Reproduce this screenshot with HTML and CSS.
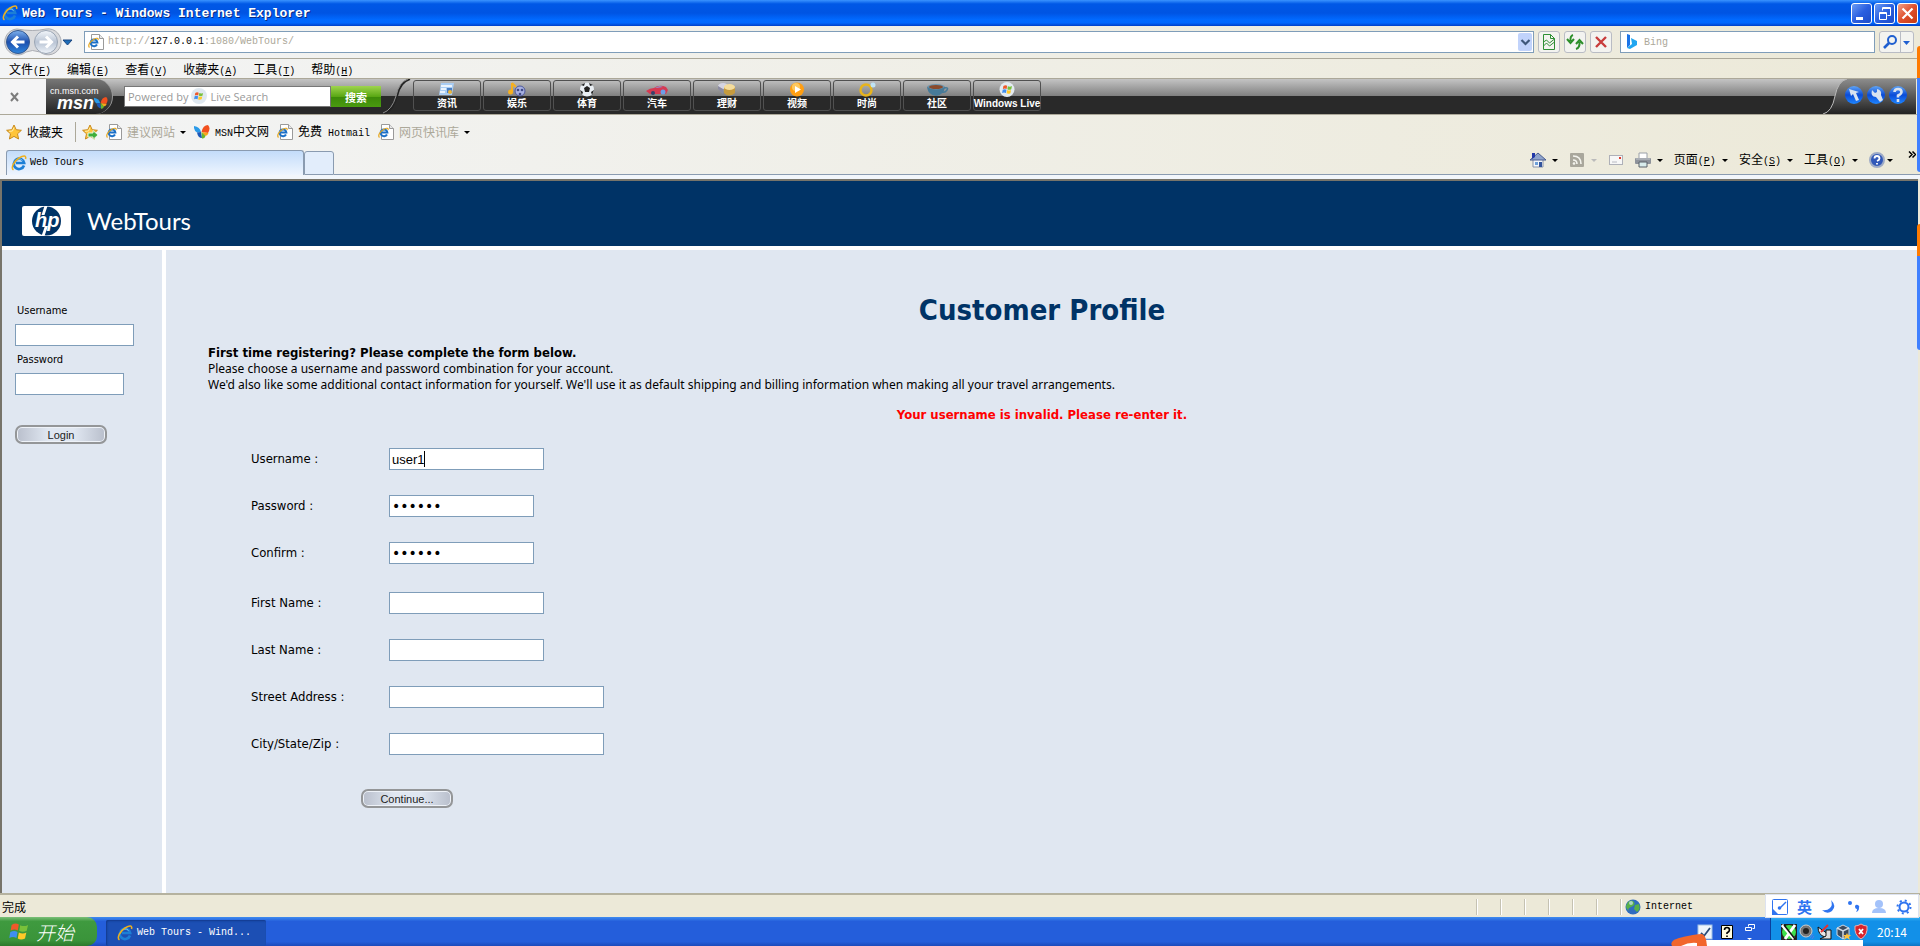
FILE: index.html
```
<!DOCTYPE html>
<html lang="zh-CN">
<head>
    <meta charset="UTF-8">
    <meta name="viewport" content="width=device-width, initial-scale=1.0">
    <title>Web Tours</title>
    <link rel="stylesheet" href="styles.css">
</head>
<body>
    <!-- shared icons -->
    <svg class="defs" width="0" height="0">
        <defs>
            <linearGradient id="gBlue" x1="0" y1="0" x2="0" y2="1">
                <stop offset="0" stop-color="#7fb2ee"/><stop offset=".5" stop-color="#1c4fae"/><stop offset="1" stop-color="#2f86dd"/>
            </linearGradient>
            <linearGradient id="gGray" x1="0" y1="0" x2="0" y2="1">
                <stop offset="0" stop-color="#f4f7fb"/><stop offset=".5" stop-color="#b9c4d4"/><stop offset="1" stop-color="#eef3f9"/>
            </linearGradient>
            <linearGradient id="gOrb" x1="0" y1="0" x2="0" y2="1">
                <stop offset="0" stop-color="#5fa4f5"/><stop offset=".5" stop-color="#0a4bd8"/><stop offset="1" stop-color="#1f86ff"/>
            </linearGradient>
            <linearGradient id="gPanel" x1="0" y1="0" x2="0" y2="1">
                <stop offset="0" stop-color="#8c8c8c"/><stop offset="1" stop-color="#222"/>
            </linearGradient>
        </defs>
        <symbol id="ie" viewBox="0 0 16 16">
            <path d="M13 10.5A5.2 5.2 0 1 1 13.2 8H5" fill="none" stroke="#1c7fd6" stroke-width="2.6"/>
            <path d="M4.600 6.500A4 4 0 0 1 11.500 5.500" fill="none" stroke="#7cc4f7" stroke-width="1"/>
            <path d="M2.500 14.800C-.5 13 3 6 8 3S15.500 .5 14.500 4" fill="none" stroke="#eeb01e" stroke-width="1.500"/>
        </symbol>
        <symbol id="page" viewBox="0 0 16 16">
            <path d="M3.500 .5h8l4 4v11h-12z" fill="#fff" stroke="#9a9a9a"/>
            <path d="M11.500 .5v4h4" fill="#e8e8e8" stroke="#9a9a9a"/>
            <path d="M9 10.500A3.400 3.400 0 1 1 9.400 8.500H3" fill="none" stroke="#1c70c8" stroke-width="2"/>
            <path d="M1.500 13.500C-.5 11.500 2 7.500 5.500 5.500S10.500 4 10 6" fill="none" stroke="#e8a81e" stroke-width="1.200"/>
        </symbol>
        <symbol id="star" viewBox="0 0 16 16">
            <path d="M8 1l2.200 4.700 5.200.6-3.900 3.500 1.100 5.200L8 12.400 3.400 15l1.100-5.200L.6 6.300l5.200-.6z" fill="#ffc53a" stroke="#c98a1c"/>
            <path d="M8 3.500L6.500 7l-3.500.3" fill="none" stroke="#fff0b0"/>
        </symbol>
        <symbol id="flag" viewBox="0 0 16 16">
            <path d="M2 3q3-2 5.500-.3L6.700 7.200Q4 5.700 1.300 7.300z" fill="#f0592a"/>
            <path d="M8.500 3.200q3 1.500 6-.2l-1 4.500q-3 1.500-5.700 0z" fill="#79c13a"/>
            <path d="M1 8.400q3-1.500 5.500 0L5.700 13Q3 11.500 .2 13z" fill="#3f8ef0"/>
            <path d="M7.500 8.800q3 1.500 5.700 0l-1 4.500q-3 1.500-5.500.1z" fill="#ffc928"/>
        </symbol>
        <symbol id="butterfly" viewBox="0 0 16 16">
            <path d="M7 8Q6 3 0 2q-.5 4 3 6.500z" fill="#2a9ae8"/>
            <path d="M3 8.500L7 8l1 6q-4 0-5-5.500z" fill="#1b58b8"/>
            <path d="M7.500 8Q9 1 14 1q3 3 0 8z" fill="#f2501e"/>
            <path d="M8 8l6.500 1q-1 3-4 3z" fill="#f8a51a"/>
            <path d="M7.500 8l4 4q-1 3-3.500 2.500z" fill="#6cb52d"/>
        </symbol>
    </svg>

    <header class="titlebar">
        <svg class="i16"><use href="#ie"/></svg>
        <span class="title">Web Tours - Windows Internet Explorer</span>
        <button class="win" aria-label="Minimize"><svg width="19" height="19"><rect x="4" y="13" width="7" height="3" fill="#fff"/></svg></button>
        <button class="win" aria-label="Restore"><svg width="19" height="19" fill="none" stroke="#fff"><path d="M7.500 6.500v-3h8v8h-3M7 4.500h9M4.500 8.500h7v7h-7zM4 9.500h8"/></svg></button>
        <button class="win close" aria-label="Close"><svg width="19" height="19" stroke="#fff" stroke-width="2.200"><path d="M4.500 4.500l10 10M14.500 4.500l-10 10"/></svg></button>
    </header>

    <div class="addressbar">
        <svg class="navbtns" width="70" height="28" viewBox="0 0 70 28">
            <path d="M13 1Q29 4 42 1a13 13 0 1 1-6 23q-8-3-14 0A13 13 0 1 1 13 1z" fill="#d9dadd" stroke="#aaacb2"/>
            <circle cx="14" cy="14" r="11.500" fill="url(#gBlue)" stroke="#33578f"/>
            <path d="M20.500 14H9M14 8.500L8.500 14l5.500 5.500" fill="none" stroke="#fff" stroke-width="3"/>
            <circle cx="42" cy="14" r="11.500" fill="url(#gGray)" stroke="#9aa5b4"/>
            <path d="M35.500 14H47M42 8.500l5.500 5.500-5.500 5.500" fill="none" stroke="#fff" stroke-width="3"/>
            <path d="M59 12h9l-4.500 5z" fill="#1e6db8" stroke="#1a4680"/>
        </svg>
        <div class="field url">
            <svg class="i16"><use href="#page"/></svg>
            <span class="mono">http://<b>127.0.0.1</b>:1080/WebTours/</span>
            <button class="drop" aria-label="History"><svg width="13" height="18"><path d="M2.500 7l4 4 4-4" fill="none" stroke="#3f587a" stroke-width="2.200"/></svg></button>
        </div>
        <button class="tool" aria-label="Compatibility view"><svg width="20" height="20" fill="none" stroke="#2e8f35"><path d="M4.500 2.500h7l4 4v11h-11zM11.500 2.500v4h4M4.500 10l3-2 3 3 5-4M4.500 14l3-3 3 3 5-4"/></svg></button>
        <button class="tool" aria-label="Refresh"><svg width="20" height="20" fill="none" stroke="#2d8f2a" stroke-width="2"><path d="M8 3Q5 4 5.500 9M2 7l3.500 4L9 7M11 17q4-1 3.500-7M11 12l3.500-4 3.500 4"/></svg></button>
        <button class="tool" aria-label="Stop"><svg width="20" height="20" stroke="#c83c3c" stroke-width="2.400"><path d="M5 5l10 10M15 5L5 15"/></svg></button>
        <div class="field search">
            <svg width="12" height="16" viewBox="0 0 12 16"><path d="M1 0l3 1v10l-3 3z" fill="#1c74e8"/><path d="M5 4l6 3v4l-7 4-3-1 5-4z" fill="#21a6f0"/></svg>
            <input class="mono" type="text" placeholder="Bing" aria-label="Bing">
        </div>
        <div class="go">
            <button aria-label="Search"><svg width="18" height="18" fill="none" stroke="#1f5fd0" stroke-width="2"><circle cx="11" cy="7" r="4"/><path d="M8 10l-5 5" stroke-width="2.600"/></svg></button>
            <button aria-label="Providers"><svg width="9" height="18"><path d="M1 8h7L4.500 12z" fill="#1f5fd0"/></svg></button>
        </div>
    </div>

    <nav class="menubar">
        <a href="#">文件<span class="mono">(<u>F</u>)</span></a>
        <a href="#">编辑<span class="mono">(<u>E</u>)</span></a>
        <a href="#">查看<span class="mono">(<u>V</u>)</span></a>
        <a href="#">收藏夹<span class="mono">(<u>A</u>)</span></a>
        <a href="#">工具<span class="mono">(<u>T</u>)</span></a>
        <a href="#">帮助<span class="mono">(<u>H</u>)</span></a>
    </nav>

    <div class="msnbar">
        <button class="x" aria-label="Close toolbar"><svg width="10" height="10" stroke="#7c7c7c" stroke-width="2"><path d="M1 1l7 8M8 1L1 9"/></svg></button>
        <div class="msnlogo">
            <small>cn.msn.com</small>
            <span><strong>msn</strong><svg width="15" height="16"><use href="#butterfly"/></svg></span>
        </div>
        <form class="livesearch">
            <label for="live">Powered by <svg class="i16"><circle cx="8" cy="8" r="8" fill="#dfe8f0"/><use href="#flag" x="3" y="3" width="10" height="10"/></svg> Live Search</label>
            <input id="live" type="text">
            <button type="button">搜索</button>
        </form>
        <svg class="arc" width="28" height="35"><path d="M0 35Q10 32 14 17 17 3 27 0" fill="none" stroke="#222" stroke-width="2"/><path d="M0 34Q9 31 13 17 16 3 25 0" fill="none" stroke="#8d8d8d"/></svg>
        <nav class="channels">
            <a href="#"><svg width="20" height="15"><path d="M4 1h13l-2 12H2z" fill="#a9cdf4"/><path d="M4 4h11M4 7h5M3 10h5" stroke="#fff" stroke-width="1.500"/><path d="M10 6h5v5h-5z" fill="#4a7fc4"/><circle cx="13" cy="10" r="2" fill="#efb73c"/></svg>资讯</a>
            <a href="#"><svg width="20" height="15"><path d="M5 1v9M5 1l4 4" stroke="#f6b01e" stroke-width="2"/><circle cx="3.500" cy="10" r="2.500" fill="#f6b01e"/><circle cx="13" cy="9" r="5" fill="#a7b0e0" stroke="#4d589c"/><circle cx="11" cy="8" r="1.300" fill="#3f4a88"/><circle cx="15" cy="8" r="1.300" fill="#3f4a88"/><circle cx="13" cy="12" r="1.300" fill="#3f4a88"/></svg>娱乐</a>
            <a href="#"><svg width="20" height="15"><circle cx="10" cy="7.500" r="7" fill="#e9eef3"/><path d="M10 4l3 2-1 4H8L7 6zM4 3l4-2-1 3zM16 3l-4-2 1 3zM3 8l3 2-1 3zM17 8l-3 2 1 3z" fill="#222"/></svg>体育</a>
            <a href="#"><svg width="22" height="15"><path d="M0 9q4-3 8-3 5-4 12-1l2 3-2 4H4z" fill="#d63a52"/><path d="M9 6q4-3 8-1z" fill="#86a6e8"/><circle cx="7" cy="11" r="2" fill="#37406c"/><circle cx="17" cy="10" r="2.500" fill="#6b9fe8"/></svg>汽车</a>
            <a href="#"><svg width="20" height="15"><ellipse cx="6" cy="4" rx="5" ry="3" fill="#d4d4e2"/><path d="M1 4v3l5 5V7z" fill="#8b8ba2"/><path d="M7 5v6q5 5 11 0V5z" fill="#c59a3e"/><ellipse cx="12.500" cy="5" rx="5.500" ry="3" fill="#f4dc9c"/></svg>理财</a>
            <a href="#"><svg width="20" height="15"><circle cx="10" cy="7.500" r="7" fill="#ff9e12"/><circle cx="9" cy="5" r="4" fill="#ffc95e"/><path d="M8 4l6 3.500L8 11z" fill="#fff"/></svg>视频</a>
            <a href="#"><svg width="20" height="15"><circle cx="9" cy="8" r="5.500" fill="none" stroke="#e8b41c" stroke-width="2.400"/><circle cx="16" cy="3" r="2.500" fill="#bfe3f4"/></svg>时尚</a>
            <a href="#"><svg width="24" height="15"><ellipse cx="11" cy="5" rx="9" ry="3" fill="#6d94ac"/><ellipse cx="11" cy="5" rx="7" ry="2" fill="#8a4a2c"/><path d="M2 5q1 8 9 9 8-1 9-9-9 5-18 0z" fill="#477a98"/><path d="M19 6q5-1 3 2t-5 2" fill="none" stroke="#477a98" stroke-width="1.500"/></svg>社区</a>
            <a href="#"><svg width="20" height="15"><circle cx="10" cy="7.500" r="7.500" fill="#e3ebf1"/><use href="#flag" x="5" y="2" width="11" height="11"/></svg>Windows Live</a>
        </nav>
        <svg class="orbs" width="94" height="35">
            <path d="M1 35Q10 33 13 17 16 2 25 0H94v35z" fill="url(#gPanel)"/>
            <path d="M1 35Q10 33 13 17 16 2 25 0" fill="none" stroke="#bbb"/>
            <g fill="url(#gOrb)"><circle cx="32" cy="16" r="9"/><circle cx="54" cy="16" r="9"/><circle cx="76" cy="16" r="9"/></g>
            <path d="M27 10l10 3-3 1 3 7-3 1-3-7-2 2z" fill="#d8e2f0"/>
            <path d="M50 11l3 3 2-1 0-3q5 1 4 6l2 5-3 2-4-5q-6 0-4-7z" fill="#d8e2f0"/>
            <path d="M72.500 13q0-3 3.500-3t3.500 3q0 2-3.500 3.500v2M76 20v3" fill="none" stroke="#d8e2f0" stroke-width="2.600"/>
        </svg>
    </div>

    <nav class="favbar">
        <a href="#"><svg class="i16"><use href="#star"/></svg>收藏夹</a>
        <i class="sep"></i>
        <a href="#" aria-label="Add to favorites"><svg class="i16"><use href="#star"/><path d="M6 9h5V6.500l5 4.500-5 4.500V13H6z" fill="#3fae3a" stroke="#e6f5e0"/></svg></a>
        <a href="#" class="dim"><svg class="i16"><use href="#page"/></svg>建议网站<i class="tri"></i></a>
        <a href="#"><svg class="i16"><use href="#butterfly"/></svg><span><span class="mono">MSN</span>中文网</span></a>
        <a href="#"><svg class="i16"><use href="#page"/></svg><span>免费<span class="mono"> Hotmail</span></span></a>
        <a href="#" class="dim"><svg class="i16"><use href="#page"/></svg>网页快讯库<i class="tri"></i></a>
    </nav>

    <div class="tabrow">
        <a href="#" class="tab mono"><svg class="i16"><use href="#ie"/></svg>Web Tours</a>
        <button class="newtab" aria-label="New tab"></button>
        <nav class="commands">
            <a href="#" aria-label="Home"><svg class="i16"><path d="M3 7h10v8H3z" fill="#f4f6fa" stroke="#8a93a8"/><path d="M0 8l8-7 8 7z" fill="#8fa4cc" stroke="#4a5d90"/><path d="M2 1h3v4L2 7z" fill="#2238a8"/><path d="M9 10h3v5H9z" fill="#33549c"/><path d="M5 10h3v3H5z" fill="#6ea0d8"/></svg><i class="tri"></i></a>
            <a href="#" aria-label="Feeds"><svg class="i16"><rect x="1" y="1" width="14" height="14" rx="1" fill="#a9a79c"/><path d="M4 4q8 0 8 8M4 8q4 0 4 4" fill="none" stroke="#f4f4ee" stroke-width="1.600"/><circle cx="5" cy="11.500" r="1.300" fill="#f4f4ee"/></svg><i class="tri off"></i></a>
            <a href="#" aria-label="Mail"><svg class="i16"><rect x="1.500" y="3.500" width="13" height="9" fill="#f7f7f7" stroke="#aeb0b8"/><path d="M4 10h5" stroke="#b8bac2"/><path d="M11 5h2v2h-2z" fill="#e03a2c"/></svg></a>
            <a href="#" aria-label="Print"><svg class="i16"><path d="M4 1h8v6H4z" fill="#fff" stroke="#9aa0a8"/><rect y="6" width="16" height="6" rx="1" fill="#8d929a"/><path d="M1 7h14" stroke="#c4c8ce"/><path d="M4 10h8v5H4z" fill="#d8ecec" stroke="#5a6068"/></svg><i class="tri"></i></a>
            <a href="#"><span>页面<span class="mono">(<u>P</u>)</span></span><i class="tri"></i></a>
            <a href="#"><span>安全<span class="mono">(<u>S</u>)</span></span><i class="tri"></i></a>
            <a href="#"><span>工具<span class="mono">(<u>O</u>)</span></span><i class="tri"></i></a>
            <a href="#" class="help" aria-label="Help"><svg class="i16"><circle cx="8" cy="8" r="7" fill="#3158b8" stroke="#9eabc6" stroke-width="2"/><path d="M5.500 6.500q0-2.500 2.500-2.500t2.500 2.500Q10.500 8 8 9M8 11v1.500" fill="none" stroke="#fff" stroke-width="1.800"/></svg><i class="tri"></i></a>
            <a href="#" class="more" aria-label="More"><svg width="8" height="7" fill="none" stroke="#000" stroke-width="1.500"><path d="M1 .5l3 3-3 3M4.500 .5l3 3-3 3"/></svg></a>
        </nav>
    </div>

    <div class="viewport">
        <div class="banner">
            <svg width="49" height="30" viewBox="0 0 49 30">
                <rect width="49" height="30" rx="2" fill="#fff"/>
                <circle cx="24.500" cy="15" r="14.500" fill="#036"/>
                <path d="M22.500 0h3l-3 9h-3zM23 20h3l-3.500 10h-3z" fill="#fff"/>
                <text x="13" y="21" font-family="Liberation Sans" font-size="20" font-style="italic" font-weight="bold" fill="#fff">hp</text>
            </svg>
            <span class="brand">WebTours</span>
        </div>
        <aside class="login">
            <form>
                <label for="loginUser">Username</label>
                <input id="loginUser" class="box w119" type="text">
                <label for="loginPass">Password</label>
                <input id="loginPass" class="box w109" type="password">
                <button class="pill" type="button">Login</button>
            </form>
        </aside>
        <main class="profile">
            <h1>Customer Profile</h1>
            <p class="intro"><b>First time registering? Please complete the form below.</b><br>
                Please choose a username and password combination for your account.<br>
                We'd also like some additional contact information for yourself. We'll use it as default shipping and billing information when making all your travel arrangements.</p>
            <p class="error">Your username is invalid. Please re-enter it.</p>
            <form class="register">
                <div class="group">
                    <label for="user">Username :</label>
                    <div class="typing"><input id="user" class="box w155" type="text" value="user1"><i class="caret"></i></div>
                    <label for="pass">Password :</label>
                    <input id="pass" class="box w145" type="password" value="secret">
                    <label for="confirm">Confirm :</label>
                    <input id="confirm" class="box w145" type="password" value="secret">
                </div>
                <div class="group">
                    <label for="first">First Name :</label>
                    <input id="first" class="box w155" type="text">
                    <label for="last">Last Name :</label>
                    <input id="last" class="box w155" type="text">
                    <label for="street">Street Address :</label>
                    <input id="street" class="box w215" type="text">
                    <label for="city">City/State/Zip :</label>
                    <input id="city" class="box w215" type="text">
                </div>
                <button class="pill" type="button">Continue...</button>
            </form>
        </main>
    </div>

    <footer class="statusbar">
        <span class="done">完成</span>
        <i></i><i></i><i></i><i></i><i></i><i></i><i></i>
        <span class="zone mono"><svg class="i16"><circle cx="8" cy="8" r="7.500" fill="#2f6cc0"/><path d="M3 3q4-3 6 0T6 8t-1 5Q1 10 1 7zM10 6l4-1q2 5-2 8l-3-3z" fill="#58b04a"/><circle cx="6" cy="4" r="2" fill="#cfe6f4" opacity=".7"/></svg>Internet</span>
    </footer>

    <div class="taskbar">
        <button class="start"><svg width="21" height="21"><use href="#flag"/></svg>开始</button>
        <button class="task mono"><svg class="i16"><use href="#ie"/></svg>Web Tours - Wind...</button>
        <div class="langbar">
            <svg class="i16"><rect x="1" y="1" width="14" height="14" fill="#eef5fc" stroke="#9fc0e4"/><path d="M4 9l3 3 6-8" fill="none" stroke="#2c4c78" stroke-width="1.800"/></svg>
            <svg class="i16"><path d="M2.500 1.500h11v13h-11z" fill="#fffde0" stroke="#000"/><path d="M5.500 6q0-2.500 2.500-2.500t2.500 2.500q0 1.500-2.500 3v1M8 11.500V13" fill="none" stroke="#000" stroke-width="1.600"/></svg>
            <svg class="i16" stroke="#fff" fill="none"><path d="M7.500 2.500v-2h6v4h-2M4.500 3.500h6v3h-6z"/><path d="M6 14h5l-2.500 2z" fill="#fff" stroke="none"/></svg>
        </div>
        <div class="tray">
            <svg class="i16"><rect width="16" height="16" fill="#222"/><circle cx="8" cy="8" r="7" fill="#3fe04a"/><path d="M1 1l12 14M14 1L4 15" stroke="#fff" stroke-width="3"/><path d="M3 1l11 14" stroke="#111" stroke-width="1.500"/></svg>
            <svg class="i16"><circle cx="7" cy="7" r="6" fill="#777" stroke="#ccc"/><circle cx="7" cy="7" r="3" fill="#222"/><path d="M11 14l3-4M13 15l2-3" stroke="#5a78e8"/></svg>
            <svg class="i16"><path d="M1 3l10 7-3 3q-7-2-7-10z" fill="#e8e8e8" stroke="#111"/><path d="M4 8l7-7" stroke="#e83030" stroke-width="2"/><path d="M9 6h5v9H3l6-3z" fill="#ddd" stroke="#111"/></svg>
            <svg class="i16"><path d="M8 1l6 3v7l-6 4-6-4V4z" fill="#3c4a5c" stroke="#cfd9e4"/><path d="M2 4l6 3 6-3M8 7v8" fill="none" stroke="#cfd9e4" stroke-width="1.500"/><path d="M12 9l1 2h3l-2 2 1 3-3-2-3 2 1-3-2-2h3z" fill="#ffc23c"/></svg>
            <svg class="i16"><path d="M8 0q3 2 6 2 1 9-6 13Q1 11 2 2q3 0 6-2z" fill="#d8232c" stroke="#e8b0b0"/><path d="M6 5l4 5M10 5l-4 5" stroke="#fff" stroke-width="1.800"/></svg>
            <span>20:14</span>
        </div>
    </div>

    <!-- floating windows over the desktop -->
    <div class="ime">
        <svg class="i16"><rect x=".5" y=".5" width="15" height="15" rx="1" fill="#fff" stroke="#2f74f0"/><path d="M0 9l7 7H0z" fill="#2f74f0"/><path d="M8 9l6-6" stroke="#2f74f0" stroke-width="1.500"/><circle cx="7.500" cy="9" r="1.800" fill="#2f74f0"/></svg>
        <span>英</span>
        <svg class="i16"><path d="M10 1q6 6 1 11-5 4-10-1 5 1 8-2t1-8z" fill="#2f74f0"/></svg>
        <svg class="i16"><circle cx="4" cy="4" r="2" fill="#2f74f0"/><path d="M9 7a2 2 0 1 1 4 2q0 3-3 4 1-1 1-3-2 0-2-3z" fill="#2f74f0"/></svg>
        <svg class="i16"><circle cx="8" cy="5" r="4" fill="#a3c2fa"/><path d="M1 14q0-5 7-5t7 5z" fill="#a3c2fa"/></svg>
        <svg class="i16" fill="none" stroke="#2f74f0"><circle cx="8" cy="8" r="4.500" stroke-width="2"/><circle cx="8" cy="8" r="6.500" stroke-width="2" stroke-dasharray="2 3.100"/></svg>
    </div>
    <i class="edge edge-top"></i>
    <i class="edge edge-mid"></i>
    <div class="popup"></div>
    <svg class="popicon" width="36" height="12"><path d="M1 12Q-2 7 8 4 24 0 31 0q4 1 5 12z" fill="#f2662c"/><path d="M10 12q8-4 16-3v3z" fill="#fff"/></svg>
</body>
</html>
```
FILE: styles.css
```
* {
    box-sizing: border-box;
}
body {
    margin: 0;
    height: 100vh;
    display: flex;
    flex-direction: column;
    position: relative;
    overflow: hidden;
    background: linear-gradient(90deg, #f3f4f5, #ece9d8);
    font-family: "Noto Sans CJK SC", sans-serif;
    font-size: 12px;
    line-height: 16px;
    color: black;
}
a {
    color: inherit;
    text-decoration: none;
}
button {
    padding: 0;
    border: none;
    background: none;
    font: inherit;
    display: flex;
    align-items: center;
    justify-content: center;
}
svg {
    display: block;
    flex-shrink: 0;
}
.defs {
    position: absolute;
}
.i16 {
    width: 16px;
    height: 16px;
    overflow: visible;
}
.mono {
    font-family: "Liberation Mono", "Noto Sans CJK SC", monospace;
    font-size: 10px;
    white-space: pre;
}
.tri {
    border: 3px solid transparent;
    border-top-color: black;
    border-bottom: none;
}
.tri.off {
    border-top-color: #bbb;
}

/* title bar */
.titlebar {
    height: 26px;
    padding: 0 2px;
    display: flex;
    align-items: center;
    gap: 2px;
    background: linear-gradient(#3a93ff, #0058e6 15%, #0054e3 50%, #0169ff 75%, #0167fd 88%, #003fc8);
    color: white;
}
.title {
    flex: 1;
    padding-left: 2px;
    font: bold 13px "Liberation Mono", monospace;
    text-shadow: 1px 1px #0a2a80;
}
.win {
    width: 21px;
    height: 21px;
    border: 1px solid white;
    border-radius: 3px;
    background: linear-gradient(135deg, #6c9cf4, #2a5fe0 50%, #1e4cc8);
}
.win.close {
    background: linear-gradient(135deg, #f0a088, #df4f2c 50%, #c43a12);
}

/* address row */
.addressbar {
    height: 33px;
    padding: 0 6px 0 4px;
    display: flex;
    align-items: center;
    gap: 4px;
    border-bottom: 1px solid #aca899;
}
.navbtns {
    margin-right: 6px;
}
.field {
    height: 22px;
    display: flex;
    align-items: center;
    background: white;
    border: 1px solid #7f9db9;
    color: #aca899;
}
.url {
    flex: 1;
    gap: 4px;
    padding: 0 1px 0 3px;
}
.url .mono {
    flex: 1;
}
.url b {
    color: black;
    font-weight: normal;
}
.drop {
    width: 14px;
    height: 18px;
    border-radius: 2px;
    background: #c1d3fb;
}
.tool {
    width: 22px;
    height: 22px;
    border: 1px solid #b9bcc4;
    border-radius: 3px;
    background: #f3f3f0;
}
.search {
    width: 255px;
    margin-left: 4px;
    padding-left: 5px;
    gap: 6px;
}
.search input {
    flex: 1;
    border: none;
    padding: 0;
    outline: none;
}
.search input::placeholder {
    color: #aca899;
}
.go {
    display: flex;
    border: 1px solid #b9bcc4;
    border-radius: 3px;
    background: #f3f3f0;
}
.go button {
    height: 20px;
    padding: 0 1px;
}
.go button + button {
    border-left: 1px solid #b9bcc4;
    padding: 0 2px 0 1px;
}

/* menu */
.menubar {
    height: 20px;
    padding: 3px 9px 0;
    display: flex;
    align-items: center;
    gap: 16px;
    border-bottom: 1px solid #aca899;
}

/* msn toolbar */
.msnbar {
    height: 35px;
    margin: 0 4px 0 2px;
    display: flex;
    align-items: stretch;
    background: linear-gradient(#c4c4c4, #808080 48%, #292929 49%, #292929);
}
.x {
    width: 44px;
    padding-right: 19px;
    background: #f4f4f5;
}
.msnlogo {
    width: 67px;
    padding: 7px 0 0 4px;
    border-radius: 0 34px 34px 0;
    border-right: 1px solid #999;
    background: linear-gradient(#777, #222);
    color: white;
    font: 11px "Liberation Sans", sans-serif;
}
.msnlogo small {
    display: block;
    font-size: 9px;
    line-height: 10px;
}
.msnlogo span {
    display: flex;
    align-items: center;
    padding-left: 7px;
}
.msnlogo strong {
    font-size: 18px;
    line-height: 14px;
    font-style: italic;
}
.msnlogo svg {
    width: 14px;
    height: 14px;
}
.livesearch {
    align-self: center;
    margin-left: 11px;
    display: flex;
    position: relative;
}
.livesearch label {
    position: absolute;
    left: 4px;
    top: 2px;
    display: flex;
    gap: 3px;
    font: 11px/17px "Open Sans", sans-serif;
    color: #999;
}
.livesearch input {
    width: 207px;
    height: 21px;
    border: 1px solid #777;
    background: white;
}
.livesearch button {
    width: 50px;
    height: 21px;
    font-size: 11px;
    font-weight: bold;
    color: white;
    background: linear-gradient(#9fd44e, #5aa814 50%, #3c8a08 51%, #4a9a10);
}
.arc {
    margin: 0 2px;
}
.channels {
    flex: 1;
    display: flex;
    gap: 2px;
    padding-top: 1px;
}
.channels a {
    width: 68px;
    height: 31px;
    padding-top: 1px;
    display: flex;
    flex-direction: column;
    align-items: center;
    border: 1px solid #505050;
    border-radius: 3px;
    font: bold 10px/14px "Liberation Sans", "Noto Sans CJK SC", sans-serif;
    color: white;
    white-space: nowrap;
}

/* favorites */
.favbar {
    height: 35px;
    padding: 0 6px;
    display: flex;
    align-items: center;
    gap: 8px;
    border-top: 1px solid #aca899;
}
.favbar a {
    display: flex;
    align-items: center;
    gap: 5px;
}
.favbar .sep {
    height: 20px;
    margin: 0 -2px 0 4px;
    border-left: 1px solid #aca899;
}
.dim {
    color: #aca899;
}

/* tabs */
.tabrow {
    height: 30px;
    padding-left: 6px;
    display: flex;
    align-items: flex-end;
    border-bottom: 4px solid #f2f6fb;
}
.tab {
    width: 298px;
    height: 25px;
    padding-left: 4px;
    display: flex;
    align-items: center;
    gap: 3px;
    border: 1px solid #8a9bb0;
    border-bottom: none;
    border-radius: 3px 3px 0 0;
    background: linear-gradient(#c3dcfa, #eef5fe);
}
.newtab {
    width: 30px;
    height: 24px;
    border: 1px solid #8a9bb0;
    border-radius: 3px 3px 0 0;
    background: #e2edfb;
}
.commands {
    flex: 1;
    height: 29px;
    display: flex;
    justify-content: flex-end;
    align-items: center;
    gap: 11px;
    padding-right: 4px;
    border-bottom: 1px solid #8a9bb0;
}
.commands a {
    display: flex;
    align-items: center;
    gap: 6px;
}
.commands .help {
    gap: 2px;
}
.commands .more {
    align-self: flex-start;
    margin-left: 4px;
    padding-top: 5px;
}

/* page frames */
.viewport {
    flex: 1;
    margin-right: 2px;
    display: grid;
    grid-template: 65px 1fr / 160px 1fr;
    gap: 4px;
    background: white;
    border: 2px solid #77746a;
    border-right: none;
    border-bottom: none;
    font-family: "DejaVu Sans Condensed", "DejaVu Sans", sans-serif;
    font-size: 13px;
}
.banner {
    grid-column: 1 / 3;
    display: flex;
    align-items: center;
    gap: 16px;
    padding: 14px 20px 0;
    background: #003366;
}
.brand {
    color: white;
    font: 24px Lato, sans-serif;
}
.login,
.profile {
    background: #e0e7f1;
}
.login form {
    display: flex;
    flex-direction: column;
    align-items: flex-start;
    padding: 53px 13px;
    font-size: 11px;
}
.login label {
    padding-left: 2px;
    margin-bottom: 5px;
}
.login .box {
    margin-bottom: 6px;
}
.login .pill {
    margin-top: 24px;
}
.box {
    height: 22px;
    padding: 0 2px;
    background: white;
    border: 1px solid #7f9db9;
    font: 13px "Liberation Sans", sans-serif;
}
.box[type="password"] {
    font: 14px "DejaVu Sans", sans-serif;
}
.w109 { width: 109px; }
.w119 { width: 119px; }
.w145 { width: 145px; }
.w155 { width: 155px; }
.w215 { width: 215px; }
.pill {
    width: 92px;
    height: 19px;
    border: 2px solid #949698;
    border-radius: 7px;
    background: linear-gradient(90deg, #b9bfcc, #e0e7f1 35%, #e0e7f1 65%, #b9bfcc);
    box-shadow: inset 0 0 0 1px #eef2f8;
    font: 11px "Liberation Sans", sans-serif;
    color: #222;
}
.profile h1 {
    margin: 0;
    padding-top: 42px;
    text-align: center;
    color: #003366;
    font-size: 29px;
    line-height: 36px;
}
.intro {
    margin: 17px 42px 0;
    font: 12px/16px "Noto Sans", sans-serif;
}
.intro b {
    font: bold 13px/16px "DejaVu Sans Condensed", "DejaVu Sans", sans-serif;
}
.error {
    margin: 14px 0 25px;
    text-align: center;
    font-weight: bold;
    color: red;
}
.register {
    padding-left: 85px;
}
.group {
    display: grid;
    grid-template-columns: 138px auto;
    justify-content: start;
    align-items: center;
    row-gap: 25px;
    margin-bottom: 28px;
}
.typing {
    position: relative;
}
.typing .box {
    display: block;
}
.caret {
    position: absolute;
    left: 35px;
    top: 3px;
    width: 1px;
    height: 16px;
    background: black;
}
.register .pill {
    margin: 34px 0 0 110px;
}

/* status bar */
.statusbar {
    height: 24px;
    padding-top: 2px;
    display: flex;
    align-items: center;
    border-top: 2px solid #b5b29f;
    background: #ece9d8;
}
.done {
    flex: 1;
    padding-left: 2px;
}
.statusbar i {
    width: 24px;
    height: 16px;
    border-left: 1px solid #c5c2b2;
    box-shadow: inset 1px 0 white;
}
.zone {
    width: 295px;
    display: flex;
    align-items: center;
    gap: 4px;
}
.statusbar i:last-of-type {
    width: 5px;
}

/* taskbar */
.taskbar {
    height: 29px;
    display: flex;
    align-items: flex-end;
    background: linear-gradient(#3f8cf0, #245edb 15%, #245edb 85%, #1c4aba);
    color: white;
}
.start {
    width: 97px;
    height: 29px;
    padding-left: 9px;
    gap: 6px;
    justify-content: flex-start;
    border-radius: 0 10px 10px 0;
    background: linear-gradient(#7cc07a, #3f9a3f 15%, #3a943a 80%, #2c7a2c);
    color: white;
    font-size: 19px;
    font-weight: 300;
    font-style: italic;
}
.task {
    width: 160px;
    height: 26px;
    margin-left: 9px;
    padding-left: 11px;
    justify-content: flex-start;
    gap: 4px;
    border-radius: 2px;
    background: #1c4fb4;
    box-shadow: inset 1px 1px 2px #123a8c;
    color: white;
}
.langbar {
    flex: 1;
    display: flex;
    justify-content: flex-end;
    gap: 6px;
    padding: 0 13px 6px 0;
}
.tray {
    height: 29px;
    padding: 1px 13px 0 10px;
    display: flex;
    align-items: center;
    gap: 2px;
    border-left: 1px solid #0b3f9c;
    background: linear-gradient(#37b4f4, #1290e8 15%, #1290e8 85%, #0d74c4);
}
.tray span {
    padding-left: 6px;
}

/* floating windows */
.ime {
    position: absolute;
    right: 1px;
    bottom: 28px;
    width: 154px;
    height: 24px;
    padding: 1px 6px 0;
    display: flex;
    align-items: center;
    justify-content: space-between;
    background: white;
    border: 1px solid #dde3f0;
}
.ime span {
    font-size: 15px;
    font-weight: bold;
    color: #2f74f0;
}
.edge {
    position: absolute;
    right: 0;
    width: 3px;
    height: 126px;
    border-radius: 3px 0 0 3px;
    background: linear-gradient(#ff7b00 32px, #4080ff 32px);
}
.edge-top {
    top: 46px;
}
.edge-mid {
    top: 224px;
}
.popup {
    position: absolute;
    right: 57px;
    bottom: 0;
    width: 170px;
    height: 6px;
    background: white;
}
.popicon {
    position: absolute;
    right: 213px;
    bottom: 0;
}
```
